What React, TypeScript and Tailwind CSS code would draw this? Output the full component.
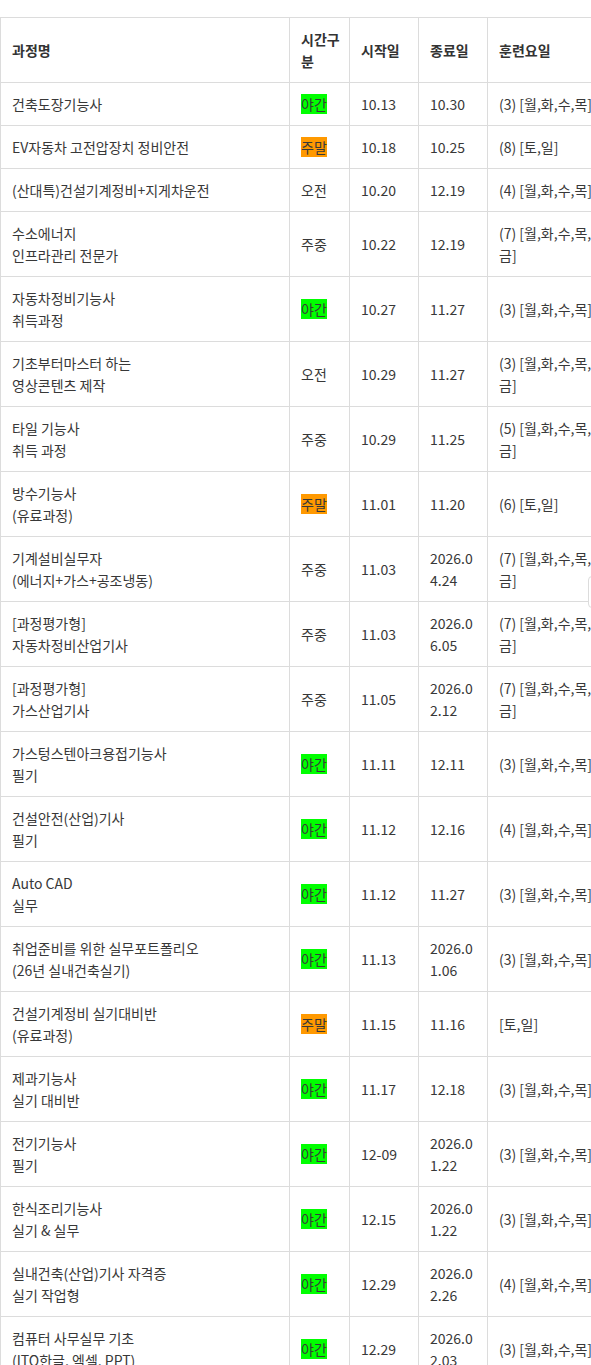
import React from "react";

type Row = {
  name: string[];
  time: string;
  start: string;
  end: string[];
  days: string[];
};

const rows: Row[] = [
  { name: ["건축도장기능사"], time: "야간", start: "10.13", end: ["10.30"], days: ["(3) [월,화,수,목]"] },
  { name: ["EV자동차 고전압장치 정비안전"], time: "주말", start: "10.18", end: ["10.25"], days: ["(8) [토,일]"] },
  { name: ["(산대특)건설기계정비+지게차운전"], time: "오전", start: "10.20", end: ["12.19"], days: ["(4) [월,화,수,목]"] },
  { name: ["수소에너지", "인프라관리 전문가"], time: "주중", start: "10.22", end: ["12.19"], days: ["(7) [월,화,수,목,", "금]"] },
  { name: ["자동차정비기능사", "취득과정"], time: "야간", start: "10.27", end: ["11.27"], days: ["(3) [월,화,수,목]"] },
  { name: ["기초부터마스터 하는", "영상콘텐츠 제작"], time: "오전", start: "10.29", end: ["11.27"], days: ["(3) [월,화,수,목,", "금]"] },
  { name: ["타일 기능사", "취득 과정"], time: "주중", start: "10.29", end: ["11.25"], days: ["(5) [월,화,수,목,", "금]"] },
  { name: ["방수기능사", "(유료과정)"], time: "주말", start: "11.01", end: ["11.20"], days: ["(6) [토,일]"] },
  { name: ["기계설비실무자", "(에너지+가스+공조냉동)"], time: "주중", start: "11.03", end: ["2026.0", "4.24"], days: ["(7) [월,화,수,목,", "금]"] },
  { name: ["[과정평가형]", "자동차정비산업기사"], time: "주중", start: "11.03", end: ["2026.0", "6.05"], days: ["(7) [월,화,수,목,", "금]"] },
  { name: ["[과정평가형]", "가스산업기사"], time: "주중", start: "11.05", end: ["2026.0", "2.12"], days: ["(7) [월,화,수,목,", "금]"] },
  { name: ["가스텅스텐아크용접기능사", "필기"], time: "야간", start: "11.11", end: ["12.11"], days: ["(3) [월,화,수,목]"] },
  { name: ["건설안전(산업)기사", "필기"], time: "야간", start: "11.12", end: ["12.16"], days: ["(4) [월,화,수,목]"] },
  { name: ["Auto CAD", "실무"], time: "야간", start: "11.12", end: ["11.27"], days: ["(3) [월,화,수,목]"] },
  { name: ["취업준비를 위한 실무포트폴리오", "(26년 실내건축실기)"], time: "야간", start: "11.13", end: ["2026.0", "1.06"], days: ["(3) [월,화,수,목]"] },
  { name: ["건설기계정비 실기대비반", "(유료과정)"], time: "주말", start: "11.15", end: ["11.16"], days: ["[토,일]"] },
  { name: ["제과기능사", "실기 대비반"], time: "야간", start: "11.17", end: ["12.18"], days: ["(3) [월,화,수,목]"] },
  { name: ["전기기능사", "필기"], time: "야간", start: "12-09", end: ["2026.0", "1.22"], days: ["(3) [월,화,수,목]"] },
  { name: ["한식조리기능사", "실기 & 실무"], time: "야간", start: "12.15", end: ["2026.0", "1.22"], days: ["(3) [월,화,수,목]"] },
  { name: ["실내건축(산업)기사 자격증", "실기 작업형"], time: "야간", start: "12.29", end: ["2026.0", "2.26"], days: ["(4) [월,화,수,목]"] },
  { name: ["컴퓨터 사무실무 기초", "(ITQ한글, 엑셀, PPT)"], time: "야간", start: "12.29", end: ["2026.0", "2.03"], days: ["(3) [월,화,수,목]"] },
];

const Lines = ({ lines }: { lines: string[] }) => (
  <>
    {lines.map((l, i) => (
      <React.Fragment key={i}>
        {i > 0 && <br />}
        {l}
      </React.Fragment>
    ))}
  </>
);

const TimeTag = ({ time }: { time: string }) => {
  if (time === "야간") return <span className="bg-[#00ff00]">{time}</span>;
  if (time === "주말") return <span className="bg-[#ff9900]">{time}</span>;
  return <>{time}</>;
};

const cell = "border border-[#dcdcdc] px-[11px] py-[10px] align-middle whitespace-nowrap";

const App: React.FC = () => {
  return (
    <div
      className="relative min-h-[1365px] overflow-hidden bg-white pt-[17px] text-[14px] leading-[22px] text-[#383838]"
      style={{ fontFamily: '"Noto Sans CJK KR", "Noto Sans", sans-serif' }}
    >
      <table className="w-[620px] table-fixed border-collapse text-left">
        <colgroup>
          <col className="w-[289px]" />
          <col className="w-[60px]" />
          <col className="w-[69px]" />
          <col className="w-[69px]" />
          <col className="w-[133px]" />
        </colgroup>
        <thead>
          <tr className="text-[#333]">
            <th className={`${cell} font-bold`}>과정명</th>
            <th className={`${cell} font-bold`}>
              시간구
              <br />분
            </th>
            <th className={`${cell} font-bold`}>시작일</th>
            <th className={`${cell} font-bold`}>종료일</th>
            <th className={`${cell} font-bold`}>훈련요일</th>
          </tr>
        </thead>
        <tbody>
          {rows.map((r, i) => (
            <tr key={i}>
              <td className={cell}>
                <Lines lines={r.name} />
              </td>
              <td className={cell}>
                <TimeTag time={r.time} />
              </td>
              <td className={cell}>{r.start}</td>
              <td className={cell}>
                <Lines lines={r.end} />
              </td>
              <td className={cell}>
                <Lines lines={r.days} />
              </td>
            </tr>
          ))}
        </tbody>
      </table>

      {/* floating widget edge */}
      <div className="absolute left-[588px] top-[576px] h-[32px] w-[20px] rounded-l-[4px] border border-[#dcdcdc] bg-white" />
    </div>
  );
};

export default App;
